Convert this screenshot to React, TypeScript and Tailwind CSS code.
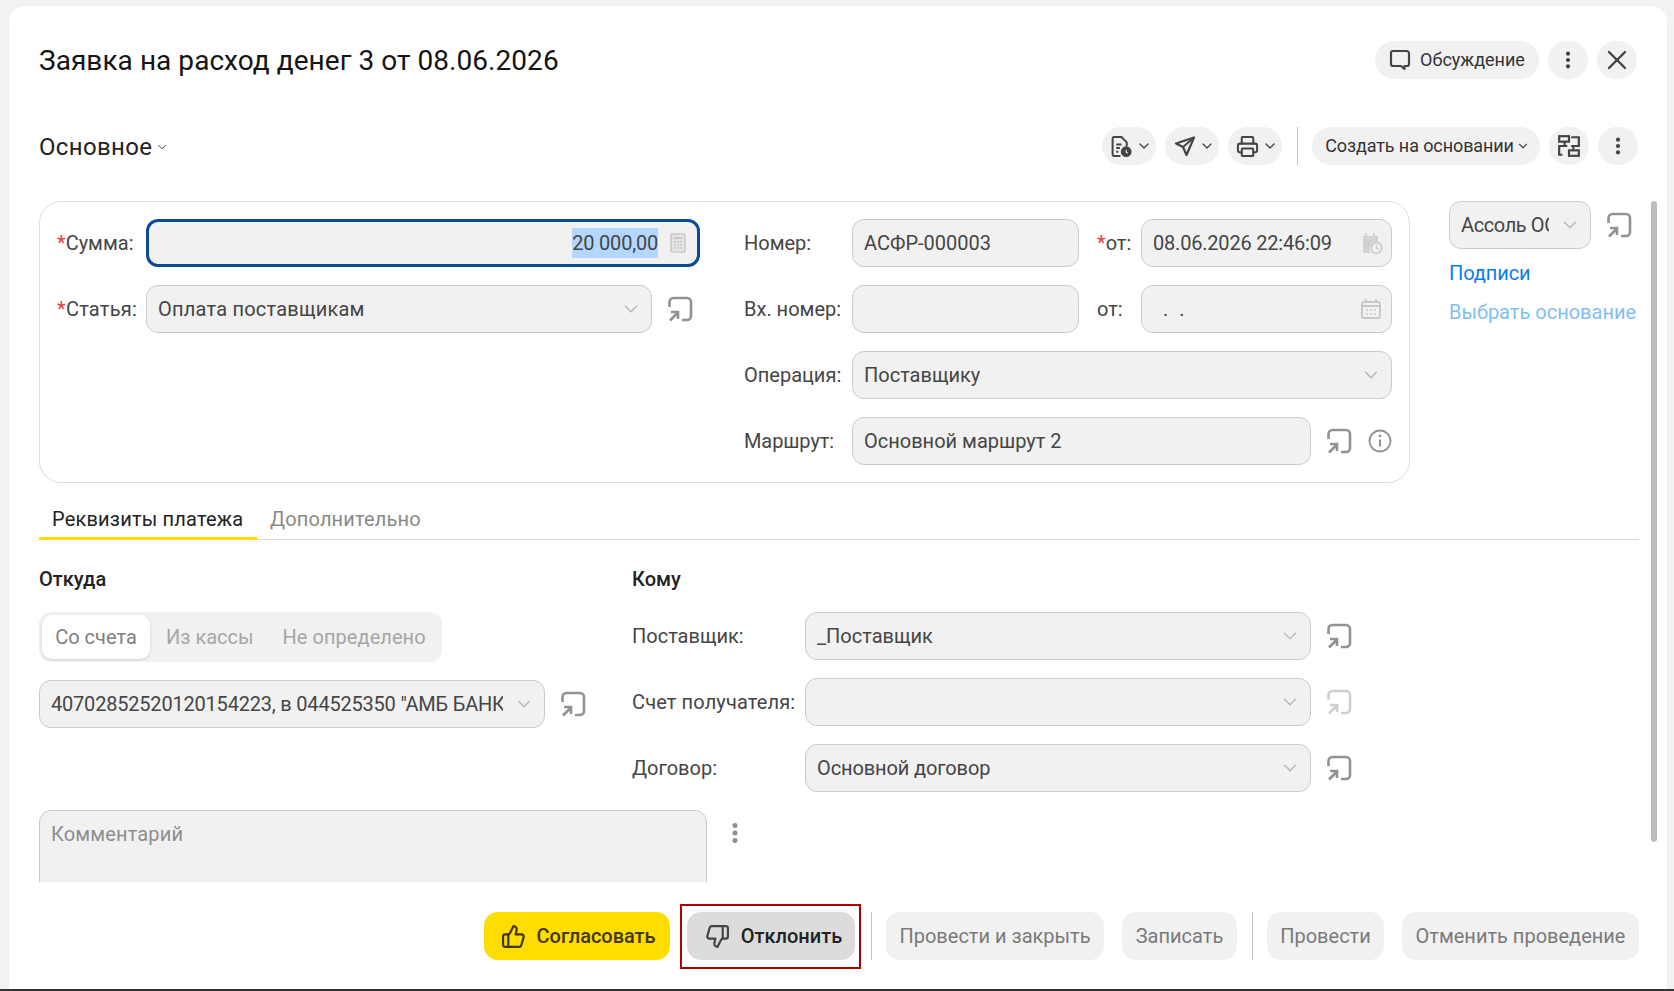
import React from "react";
import { ChevronDown, Printer, ThumbsDown, ThumbsUp, X } from "lucide-react";

const OpenIcon = ({ light = false }: { light?: boolean }) => (
  <svg width="26" height="26" viewBox="0 0 26 26" fill="none" stroke={light ? "#cfcfcf" : "#929292"} strokeWidth="2.6" className="shrink-0">
    <path d="M2.5 11V6a4 4 0 0 1 4-4h13.5a4 4 0 0 1 4 4v14a4 4 0 0 1-4 4h-5" />
    <path d="M3 24.5l7.5-7.5M4 16h7v7" />
  </svg>
);

const Dots = ({ color = "#444444" }: { color?: string }) => (
  <svg width="6" height="18" viewBox="0 0 6 18" fill={color}>
    <circle cx="3" cy="2.7" r="2.1" />
    <circle cx="3" cy="9" r="2.1" />
    <circle cx="3" cy="15.3" r="2.1" />
  </svg>
);

const Chev = ({ cls = "text-[#bababa]", size = 22, sw = 1.7 }: { cls?: string; size?: number; sw?: number }) => (
  <ChevronDown size={size} strokeWidth={sw} className={`shrink-0 ${cls}`} />
);

const Field = ({ w, children, select = false, track = "" }: { w: string; children?: React.ReactNode; select?: boolean; track?: string }) => (
  <div className={`${w} h-12 shrink-0 flex items-center gap-[10px] pl-[11px] ${select ? "pr-[9px]" : "pr-[11px]"} rounded-[12px] border border-[#cbcbcb] bg-[#f1f1f1] text-[20px] text-[#454545]`}>
    <div className={`flex-1 min-w-0 overflow-hidden whitespace-nowrap ${track}`}>{children}</div>
    {select && <Chev />}
  </div>
);

const Label = ({ w, req = false, track = "", children }: { w: string; req?: boolean; track?: string; children: React.ReactNode }) => (
  <div className={`${w} ${track} shrink-0 text-[20px] text-[#454545] whitespace-nowrap`}>
    {req && <span className="text-[#f03a3a]">*</span>}
    {children}
  </div>
);

const CalendarClock = () => (
  <svg width="22" height="24" viewBox="0 0 22 24" fill="none" className="shrink-0">
    <path d="M2 5h14a1 1 0 0 1 1 1v5a7 7 0 0 0-7 11H3a1 1 0 0 1-1-1V6a1 1 0 0 1 1-1z" fill="#d2d2d2" />
    <path d="M5 2v4M13 2v4" stroke="#d2d2d2" strokeWidth="2" />
    <circle cx="15.5" cy="17" r="5.3" stroke="#cdcdcd" strokeWidth="1.8" />
    <path d="M15.5 14v3.2l2 1.3" stroke="#cdcdcd" strokeWidth="1.4" />
  </svg>
);

const Calendar = () => (
  <svg width="22" height="22" viewBox="0 0 22 22" fill="none" className="shrink-0">
    <rect x="2" y="4" width="18" height="16" rx="2" stroke="#c8c8c8" strokeWidth="2" />
    <path d="M2 7h18v2H2z" fill="#c8c8c8" />
    <path d="M6 1v4M16 1v4" stroke="#c8c8c8" strokeWidth="2" />
    <path d="M6 12h2M10 12h2M14 12h2M6 16h2M10 16h2M14 16h2" stroke="#c8c8c8" strokeWidth="1.5" />
  </svg>
);

const Calc = () => (
  <svg width="16" height="20" viewBox="0 0 16 20" fill="none" className="shrink-0">
    <rect x="1" y="1" width="14" height="18" rx="1.5" stroke="#c9c9c9" strokeWidth="1.6" fill="#e6e6e6" />
    <path d="M3.5 4h9v2h-9z" fill="#c9c9c9" />
    <path d="M4 9h1.6M7.2 9h1.6M10.4 9H12M4 12h1.6M7.2 12h1.6M10.4 12H12M4 15h1.6M7.2 15h1.6M10.4 15H12" stroke="#bdbdbd" strokeWidth="1.6" />
  </svg>
);

const ToolBtn = ({ children }: { children: React.ReactNode }) => (
  <div className="w-[54px] h-[38px] rounded-full bg-[#f1f1f1] flex items-center justify-center gap-[3px] pl-[4px]">
    {children}
    <Chev cls="text-[#444444]" size={16} sw={2} />
  </div>
);

const Round = ({ children }: { children: React.ReactNode }) => (
  <div className="w-10 h-[38px] rounded-full bg-[#f1f1f1] flex items-center justify-center shrink-0">{children}</div>
);

const Btn = ({ w, children }: { w: string; children: React.ReactNode }) => (
  <div className={`${w} h-12 rounded-[14px] bg-[#f1f1f1] flex items-center justify-center text-[20px] text-[#7a7a7a] shrink-0`}>{children}</div>
);

export default function App() {
  return (
    <div className="w-full h-[991px] overflow-hidden bg-[#f2f2f2] flex flex-col [font-family:Roboto,sans-serif]">
      <div className="h-[989px] pt-[6px] pl-[9px] pr-[7px]">
        <div className="relative h-[983px] bg-white rounded-t-[16px] pl-[30px] pt-[35px] pr-[28px]">
          {/* header */}
          <div className="flex items-center h-[38px]">
            <div className="flex-1 pt-[2px] text-[28px] tracking-[0.05px] text-[#141414] whitespace-nowrap">Заявка на расход денег 3 от 08.06.2026</div>
            <div className="w-[164px] h-[38px] pb-[1px] rounded-full bg-[#f1f1f1] flex items-center justify-center gap-[9px] text-[18px] text-[#333333]">
              <svg width="22" height="22" viewBox="0 0 22 22" fill="none" stroke="#444444" strokeWidth="2.2">
                <path d="M4 2h14a2.5 2.5 0 0 1 2 2v11a2 2 0 0 1-2 2h-2.5v3L12 17H4a2 2 0 0 1-2-2V4a2 2 0 0 1 2-2z" strokeLinejoin="round" />
              </svg>
              Обсуждение
            </div>
            <div className="ml-[9px]"><Round><Dots /></Round></div>
            <div className="ml-[9px] mr-[2px]"><Round><X size={32} strokeWidth={1.8} className="text-[#444444]" /></Round></div>
          </div>
          {/* toolbar */}
          <div className="flex items-center h-[38px] mt-[48px]">
            <div className="flex-1 flex items-center gap-[3px] pt-[2px] text-[24px] tracking-[0.35px] text-[#222222]">
              Основное
              <Chev cls="text-[#444444]" size={14} />
            </div>
            <div className="flex items-center gap-[9px]">
              <ToolBtn>
                <svg width="23" height="23" viewBox="0 0 22 22" fill="none" stroke="#444444" strokeWidth="1.9">
                  <path d="M10 20H4a1.5 1.5 0 0 1-1.5-1.5v-15A1.5 1.5 0 0 1 4 2h7l5 5v4" />
                  <path d="M6 9h5M6 12.5h3.5M6 16h2" />
                  <circle cx="15.5" cy="16" r="4.2" fill="#444444" />
                  <path d="M15.5 14v2.4l1.5 1" stroke="#f1f1f1" strokeWidth="1" />
                </svg>
              </ToolBtn>
              <ToolBtn>
                <svg width="22" height="22" viewBox="0 0 22 22" fill="none" stroke="#444444" strokeWidth="2.2" strokeLinejoin="round">
                  <path d="M20 2.5L2 8.5l7 3.5 3.5 8z" />
                  <path d="M9 12l11-9.5" strokeWidth="1.8" />
                </svg>
              </ToolBtn>
              <ToolBtn><Printer size={23} strokeWidth={2.1} className="text-[#444444]" /></ToolBtn>
            </div>
            <div className="w-px h-[38px] bg-[#c4c4c4] ml-[15px] mr-[14px]" />
            <div className="w-[228px] h-[38px] pb-[1px] pl-[3px] rounded-full bg-[#f1f1f1] flex items-center justify-center gap-[2px] text-[18px] tracking-[-0.1px] text-[#333333] whitespace-nowrap">
              Создать на основании
              <Chev cls="text-[#444444]" size={14} sw={2} />
            </div>
            <div className="ml-[9px]">
              <Round>
                <svg width="24" height="24" viewBox="0 0 22 22" fill="none" stroke="#444444" strokeWidth="2">
                  <rect x="2" y="2" width="9" height="5" />
                  <path d="M13 3h7v8h-7" />
                  <path d="M7 7v4M9.5 11H2v8h3" />
                  <rect x="11" y="15" width="9" height="5" />
                  <path d="M15 11v4" />
                </svg>
              </Round>
            </div>
            <div className="ml-[9px] mr-[1px]"><Round><Dots /></Round></div>
          </div>
          {/* scroll area */}
          <div className="mt-[36px] h-[681px] overflow-hidden">
            <div className="flex items-start">
              <div className="w-[1371px] h-[282px] shrink-0 rounded-[22px] border border-[#dddddd] pt-[17px] pl-[17px] flex">
                <div className="w-[687px] shrink-0 flex flex-col gap-[18px]">
                  <div className="flex items-center">
                    <Label w="w-[89px]" req>Сумма:</Label>
                    <div className="w-[554px] h-12 shrink-0 flex items-center justify-end pr-[11px] gap-[12px] rounded-[12px] border-[3px] border-[#0a4b96] bg-[#f1f1f1] text-[20px] text-[#454545]">
                      <span className="bg-[#b3d7ff] leading-[30px] tracking-[-0.2px]">20 000,00</span>
                      <Calc />
                    </div>
                  </div>
                  <div className="flex items-center">
                    <Label w="w-[89px]" req track="tracking-[0.25px]">Статья:</Label>
                    <Field w="w-[506px]" select track="tracking-[0.22px]">Оплата поставщикам</Field>
                    <div className="ml-[15px]"><OpenIcon /></div>
                  </div>
                </div>
                <div className="flex flex-col gap-[18px]">
                  <div className="flex items-center">
                    <Label w="w-[108px]">Номер:</Label>
                    <Field w="w-[227px]">АСФР-000003</Field>
                    <Label w="w-[44px] ml-[18px]" req>от:</Label>
                    <div className="w-[251px] h-12 shrink-0 flex items-center justify-between pl-[11px] pr-[8px] rounded-[12px] border border-[#cbcbcb] bg-[#f1f1f1] text-[20px] tracking-[-0.2px] text-[#454545]">
                      08.06.2026 22:46:09
                      <CalendarClock />
                    </div>
                  </div>
                  <div className="flex items-center">
                    <Label w="w-[108px]">Вх. номер:</Label>
                    <Field w="w-[227px]" />
                    <Label w="w-[44px] ml-[18px]">от:</Label>
                    <div className="w-[251px] h-12 shrink-0 flex items-center justify-between pl-[21px] pr-[9px] rounded-[12px] border border-[#cbcbcb] bg-[#f1f1f1] text-[20px] tracking-[3px] text-[#454545]">
                      . .
                      <Calendar />
                    </div>
                  </div>
                  <div className="flex items-center">
                    <Label w="w-[108px]">Операция:</Label>
                    <Field w="w-[540px]" select>Поставщику</Field>
                  </div>
                  <div className="flex items-center">
                    <Label w="w-[108px]" track="tracking-[-0.1px]">Маршрут:</Label>
                    <Field w="w-[459px]">Основной маршрут 2</Field>
                    <div className="ml-[15px]"><OpenIcon /></div>
                    <svg width="24" height="24" viewBox="0 0 24 24" fill="none" stroke="#929292" strokeWidth="1.8" className="ml-[16px]">
                      <circle cx="12" cy="12" r="10.5" />
                      <path d="M12 10.5v7" strokeWidth="2" />
                      <circle cx="12" cy="7" r="1.3" fill="#929292" stroke="none" />
                    </svg>
                  </div>
                </div>
              </div>
              <div className="ml-[39px] w-[190px] shrink-0">
                <div className="flex items-center">
                  <Field w="w-[142px]" select track="tracking-[-0.4px]">Ассоль ООО</Field>
                  <div className="ml-[15px]"><OpenIcon /></div>
                </div>
                <div className="mt-[9px] text-[20px] leading-[30px] text-[#0a7cf0] tracking-[-0.1px]">Подписи</div>
                <div className="mt-[9px] text-[20px] leading-[30px] text-[#82bdf7] whitespace-nowrap">Выбрать основание</div>
              </div>
            </div>
            {/* tabs */}
            <div className="mt-[16px] h-[41px] flex border-b border-[#dddddd] w-[1600px] text-[20px]">
              <div className="w-[218px] h-[41px] border-b-[3px] border-[#ffdd00] pl-[13px] text-[#222222] leading-[40px] tracking-[0.19px]">Реквизиты платежа</div>
              <div className="pl-[13px] text-[#8a8a8a] leading-[40px] tracking-[0.16px]">Дополнительно</div>
            </div>
            {/* columns */}
            <div className="flex mt-[27px]">
              <div className="w-[593px] shrink-0">
                <div className="h-6 text-[20px] leading-6 font-medium text-[#222222]">Откуда</div>
                <div className="mt-[21px] w-[403px] h-[50px] rounded-[12px] bg-[#f1f1f1] p-[3px] flex items-center text-[20px] text-[#a6a6a6]">
                  <div className="w-[108px] h-[44px] rounded-[10px] bg-white shadow-[0_1px_3px_#00000026] flex items-center justify-center text-[#808080]">Со счета</div>
                  <div className="ml-[16px]">Из кассы</div>
                  <div className="ml-[29px] tracking-[0.05px]">Не определено</div>
                </div>
                <div className="mt-[18px] flex items-center">
                  <Field w="w-[506px]" select track="tracking-[-0.2px]">40702852520120154223, в 044525350 "АМБ БАНК"</Field>
                  <div className="ml-[15px]"><OpenIcon /></div>
                </div>
              </div>
              <div>
                <div className="h-6 text-[20px] leading-6 font-medium text-[#222222]">Кому</div>
                <div className="mt-[21px] flex flex-col gap-[18px]">
                  <div className="flex items-center">
                    <Label w="w-[173px]">Поставщик:</Label>
                    <Field w="w-[506px]" select>_Поставщик</Field>
                    <div className="ml-[15px]"><OpenIcon /></div>
                  </div>
                  <div className="flex items-center">
                    <Label w="w-[173px]" track="tracking-[0.13px]">Счет получателя:</Label>
                    <Field w="w-[506px]" select />
                    <div className="ml-[15px]"><OpenIcon light /></div>
                  </div>
                  <div className="flex items-center">
                    <Label w="w-[173px]">Договор:</Label>
                    <Field w="w-[506px]" select track="tracking-[-0.12px]">Основной договор</Field>
                    <div className="ml-[15px]"><OpenIcon /></div>
                  </div>
                </div>
              </div>
            </div>
            {/* comment */}
            <div className="mt-[18px] flex items-start">
              <div className="w-[668px] h-[120px] rounded-[12px] border border-[#cbcbcb] bg-[#f1f1f1] pl-[11px] pt-[8px] text-[20px] tracking-[0.15px] text-[#8d8d8d] shrink-0">Комментарий</div>
              <div className="ml-[25px] mt-[14px] scale-[1.2]"><Dots color="#8f8f8f" /></div>
            </div>
          </div>
          {/* footer */}
          <div className="mt-[22px] flex items-center justify-end">
            <div className="w-[186px] h-12 rounded-[14px] bg-[#ffdd00] flex items-center justify-center gap-[11px] pl-[2px] text-[20px] font-medium tracking-[-0.05px] text-[#3f3800]">
              <ThumbsUp size={25} strokeWidth={2.1} />
              Согласовать
            </div>
            <div className="ml-[10px] mb-[-1px] w-[181px] h-[65px] border-2 border-[#b00000] pb-[1px] flex items-center justify-center shrink-0">
              <div className="w-[168px] h-12 rounded-[14px] bg-[#dcdcdc] flex items-center justify-center gap-[11px] pl-[6px] text-[20px] font-medium text-[#222222]">
                <ThumbsDown size={25} strokeWidth={2.1} className="text-[#444444]" />
                Отклонить
              </div>
            </div>
            <div className="w-px h-12 bg-[#c4c4c4] ml-[10px] mr-[14px]" />
            <Btn w="w-[218px]">Провести и закрыть</Btn>
            <div className="ml-[18px]"><Btn w="w-[115px]">Записать</Btn></div>
            <div className="w-px h-12 bg-[#c4c4c4] ml-[15px] mr-[14px]" />
            <Btn w="w-[117px]">Провести</Btn>
            <div className="ml-[18px]"><Btn w="w-[237px]">Отменить проведение</Btn></div>
          </div>
          {/* overlay scrollbar */}
          <div className="absolute left-[1642px] top-[195px] w-[6px] h-[641px] rounded-full bg-[#bdbdbd]" />
        </div>
      </div>
      <div className="h-[2px] bg-[#333333]" />
    </div>
  );
}
